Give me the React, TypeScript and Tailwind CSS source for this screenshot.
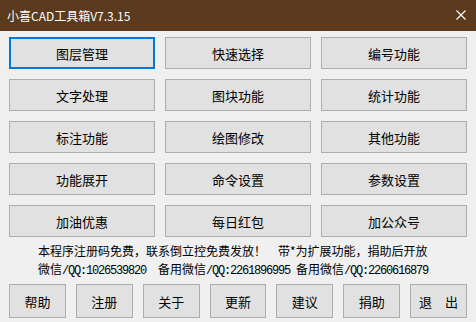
const mainButtons = [
  "图层管理", "快速选择", "编号功能",
  "文字处理", "图块功能", "统计功能",
  "标注功能", "绘图修改", "其他功能",
  "功能展开", "命令设置", "参数设置",
  "加油优惠", "每日红包", "加公众号",
];

const bottomButtons = ["帮助", "注册", "关于", "更新", "建议", "捐助", "退　出"];

const cjk = "font-['Noto_Sans_CJK_SC',sans-serif]";
const mono = "font-['Liberation_Mono','Noto_Sans_CJK_SC',monospace] tracking-[-1.2px]";

export default function App() {
  return (
    <div className={`w-[476px] h-[322px] bg-[#f0f0f0] ${cjk} text-black overflow-hidden`}>
      {/* title bar */}
      <div className="h-[31px] bg-[#5b3a1d] flex items-center justify-between pl-[7px] pr-[10px]">
        <span className="text-white text-[12px] leading-none">小喜CAD工具箱V7.3.15</span>
        <svg width="10" height="10" viewBox="0 0 10 10" className="mt-[-2px]">
          <path d="M0.5 0.5 L9.5 9.5 M9.5 0.5 L0.5 9.5" stroke="#ffffff" strokeWidth="1.2" />
        </svg>
      </div>

      <div className="grid grid-cols-3 gap-x-[10px] gap-y-[10px] px-[9px] pt-[6px] w-[476px]">
        {mainButtons.map((label, i) => (
          <button
            key={label}
            className={`h-[32px] bg-[#e1e1e1] text-[13px] leading-none ${
              i === 0 ? "border-2 border-[#0078d7]" : "border border-[#adadad]"
            }`}
          >
            {label}
          </button>
        ))}
      </div>

      <div className="pl-[38px] mt-[5px] text-[12px] leading-[18px] whitespace-pre">
        <div>
          本程序注册码免费，联系倒立控免费发放！<span className="inline-block w-[12px]" />带*为扩展功能，捐助后开放
        </div>
        <div>
          微信<span className={mono}>/QQ:1026539820  </span>备用微信
          <span className={mono}>/QQ:2261896995 </span>备用微信
          <span className={mono}>/QQ:2260616879</span>
        </div>
      </div>

      <div className="flex gap-[10px] px-[9px] mt-[4px]">
        {bottomButtons.map((label) => (
          <button
            key={label}
            className="w-[57px] h-[34px] bg-[#e1e1e1] border border-[#adadad] text-[13px] leading-none"
          >
            {label}
          </button>
        ))}
      </div>
    </div>
  );
}
